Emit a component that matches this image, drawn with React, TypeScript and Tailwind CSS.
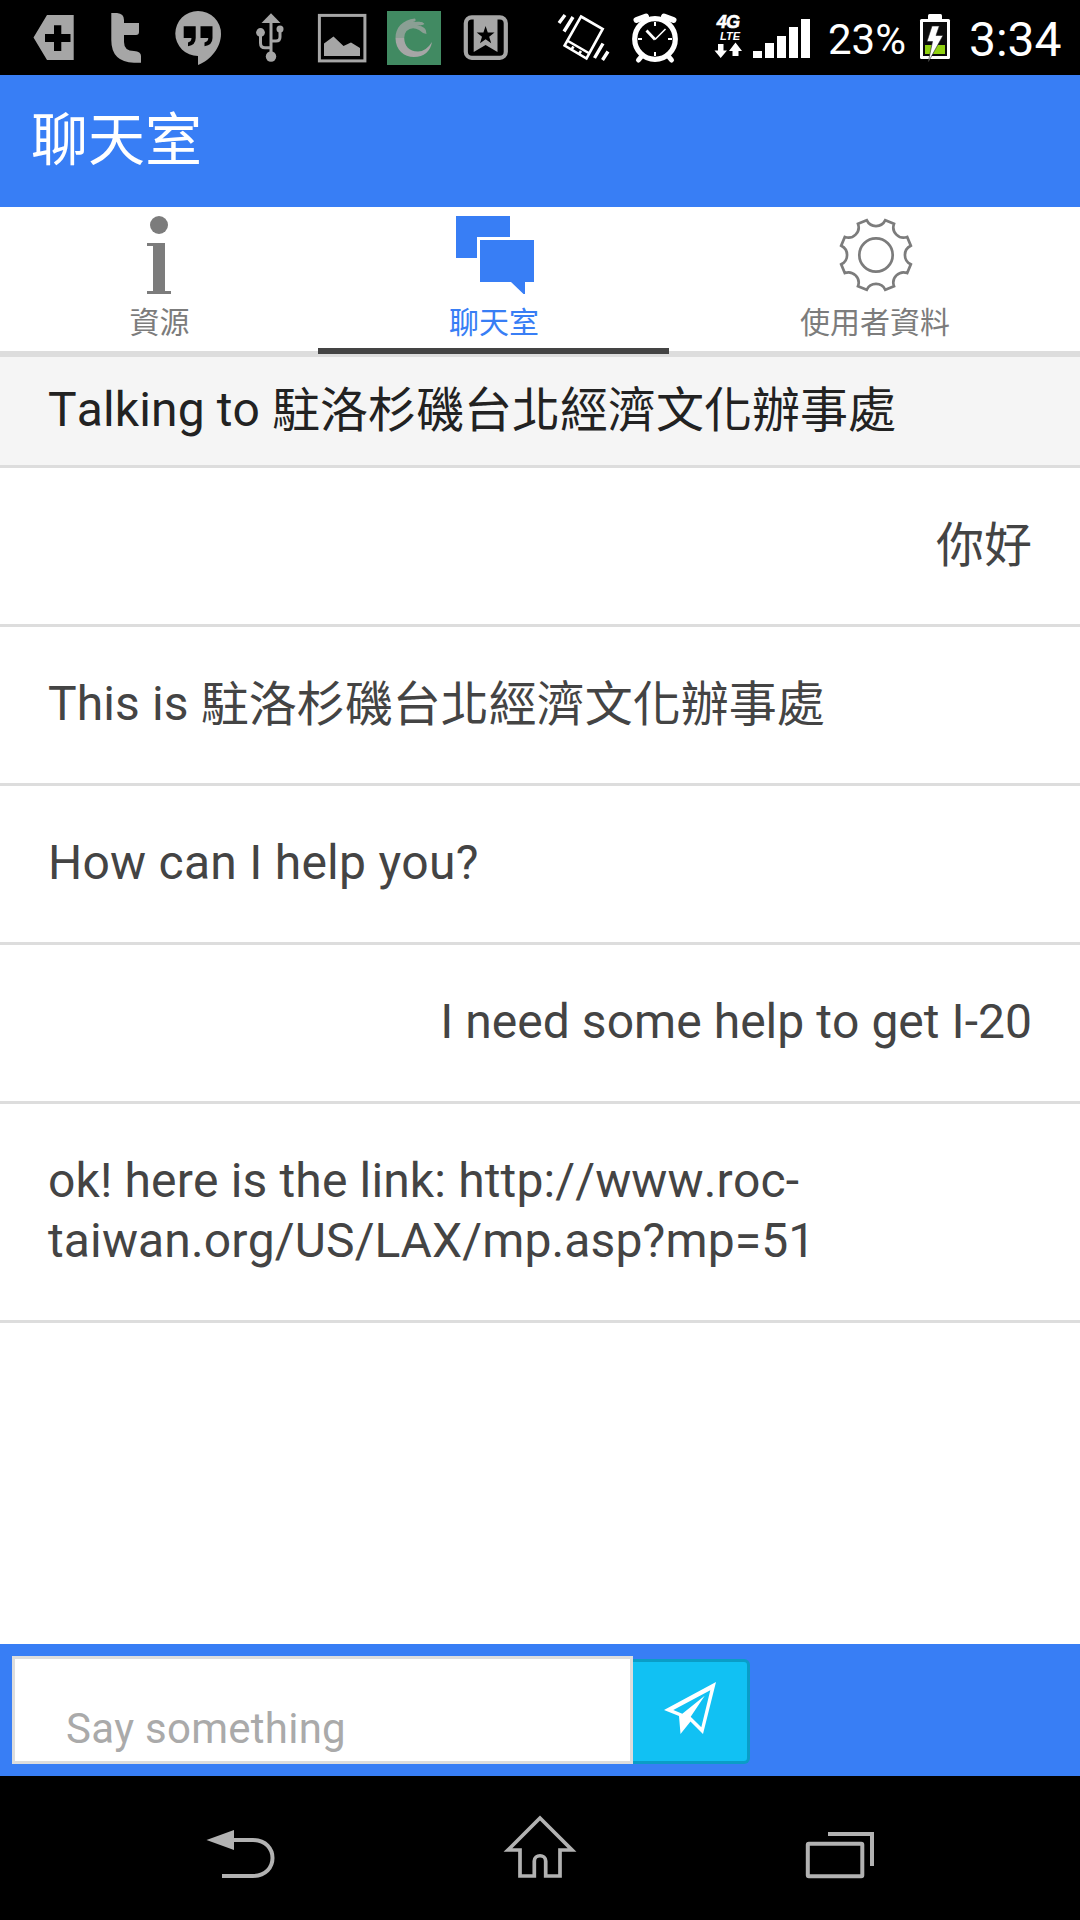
import type { ReactNode } from 'react';
import clsx from 'clsx';

type Message = { text: string; intro?: string; mine?: boolean; className?: string };

const messages: Message[] = [
  { text: '你好', mine: true, className: 'py-12' },
  { intro: 'This is ', text: '駐洛杉磯台北經濟文化辦事處', className: 'py-12' },
  { text: 'How can I help you?', className: 'pt-[47px] pb-[49px] tracking-[0.25px]' },
  {
    text: 'I need some help to get I-20',
    mine: true,
    className: 'pt-[47px] pb-[49px] tracking-[0.04px]',
  },
  {
    text: 'ok! here is the link: http://www.roc-taiwan.org/US/LAX/mp.asp?mp=51',
    className: 'pt-[47px] pb-[49px] tracking-[0.14px]',
  },
];

// Latin words in front of Chinese ones sit a pixel above the Chinese baseline
const Intro = ({ children }: { children: ReactNode }) => (
  <span className="align-[1px] leading-none tracking-[0.12px]">{children}</span>
);

// Status bar glyphs share one 75px tall strip, x is where the glyph's slice starts
const Glyph = ({ x, w, children }: { x: number; w: number; children: ReactNode }) => (
  <svg
    width={w}
    height={75}
    viewBox={`${x} 0 ${w} 75`}
    fill="currentColor"
    className="shrink-0"
  >
    {children}
  </svg>
);

const Notifications = () => (
  <div className="flex text-[#a6a6a6]">
    <Glyph x={0} w={92}>
      <path
        fillRule="evenodd"
        d="M33.5 37.5 47 15H73.7V60H47ZM54 25.3V34H45V42H54V51H61.3V42H70.5V34H61.3V25.3Z"
      />
    </Glyph>
    <Glyph x={92} w={70}>
      <path d="M111.3 13H117Q124 13.500 124 20V23H139V32Q139 35 136 35H124V42Q124 51 134 51Q141 51.500 141 56V62.700H134Q111.300 62 111.300 40Z" />
    </Glyph>
    <Glyph x={162} w={74}>
      <path d="M198 11A23 22.500 0 0 1 221 34C221 47 211 60 198 65V56A22.700 22.500 0 0 1 198 11Z" />
      <path
        d="M183.700 26.300H195.700V38Q195.700 45 188 46.300V42.500Q191.500 41.500 191.500 38H183.700ZM200.500 26.300H212.500V38Q212.500 45 204.500 46.300V42.500Q208.300 41.500 208.300 38H200.500Z"
        fill="#000"
      />
    </Glyph>
    <Glyph x={236} w={66}>
      <path d="M271 13.300 280.500 23H261.500Z" />
      <path
        d="M271 20V56M260.500 33V43Q260.500 47.800 265 47.800H271M280 29V37Q280 41 276 41H271"
        fill="none"
        stroke="currentColor"
        strokeWidth={3}
      />
      <circle cx={271} cy={56.500} r={5.200} />
      <circle cx={260.500} cy={32.500} r={4.400} />
      <circle cx={280} cy={29} r={3.500} />
    </Glyph>
    <Glyph x={302} w={76}>
      <rect
        x={319.400}
        y={15.400}
        width={45.500}
        height={45.500}
        fill="none"
        stroke="currentColor"
        strokeWidth={3}
      />
      <path d="M324 56V43.500L333.500 36.500 343.500 46 351 42.500 360 48V56Z" />
    </Glyph>
    <Glyph x={378} w={72}>
      <rect x={387} y={11} width={54} height={54} fill="#418a62" />
      <path
        d="M395.500 38C395.500 28 402 20 415 18.500Q417 21 413 22Q423 21 424 24Q420 26 417 25.500Q427 26 426.500 34Q422 33 419 30Q412 26 406.500 31Q404 34 404.200 38Z"
        fill="#8b9f94"
      />
      <path d="M395.500 38C395.500 50 404 57 414 57C424 57 430.500 51 432 42Q426 51.500 418 51.500C409 51.500 404.500 46 404.200 38Z" />
      <path d="M415 23Q420 20 424.500 24Q421 26 418 24.500Z" fill="#8b9f94" />
    </Glyph>
    <Glyph x={450} w={80}>
      <rect
        x={465.800}
        y={17.300}
        width={40}
        height={40.500}
        rx={6}
        fill="none"
        stroke="currentColor"
        strokeWidth={4.200}
      />
      <path d="M473.700 17H497.500V52L485.600 45 473.700 52Z" />
      <path
        d="M485.600 26 487.800 32.600H494.500L489.200 36.700 491.200 43.300 485.600 39.300 480 43.300 482 36.700 476.700 32.600H483.400Z"
        fill="#000"
      />
    </Glyph>
  </div>
);

const SystemIcons = () => (
  <div className="flex text-white">
    <Glyph x={550} w={70}>
      <path
        d="M581 16.500 602.700 29 586.500 58.500 564.600 45.500ZM568 41 589.500 53.500M573.500 46.500 571.500 49.500M581 51 579 54"
        fill="none"
        stroke="currentColor"
        strokeWidth={2.600}
      />
      <path
        d="M559 23 565 15M564 31.500 573 17M594.500 58 603 43.500M602.500 60 608 51.500"
        stroke="currentColor"
        strokeWidth={3.400}
      />
    </Glyph>
    <Glyph x={620} w={70}>
      <g fill="none" stroke="currentColor">
        <circle cx={655} cy={39} r={20.300} strokeWidth={5.200} />
        <path d="M636.500 20 646 16.500M673.500 20 664 16.500" strokeWidth={6} strokeLinecap="round" />
        <path d="M641 57 638.500 60M669 57 671.500 60" strokeWidth={5} strokeLinecap="round" />
        <path d="M655 22V26M655 52V56M638 39H642M668 39H672" strokeWidth={2} />
        <path d="M646.500 30.500 655 39.500" strokeWidth={2.800} />
        <path d="M655 39.500 665.500 29" strokeWidth={1.600} />
      </g>
    </Glyph>
    <div className="flex h-[75px] w-[56px] shrink-0 flex-col items-center pt-[14px] pl-[20px] font-['Liberation_Sans'] font-bold italic">
      <span className="text-[18px] leading-[17px] tracking-[-0.8px] [-webkit-text-stroke:0.6px_white]">
        4G
      </span>
      <span className="ml-1 text-[11px] leading-[10px]">LTE</span>
      <svg width={28} height={18} viewBox="714 41 28 18" fill="currentColor">
        <path d="M718 44H723.500V50.500H727L720.700 58 714.500 50.500H718ZM732.500 56H738.500V51H742L735.500 42.500 729 51H732.500Z" />
      </svg>
    </div>
    <Glyph x={746} w={82}>
      <path d="M753 51H762V58H753ZM765 43H774V58H765ZM777 36H786V58H777ZM789 27H798V58H789ZM801 19H810V58H801Z" />
    </Glyph>
    <span className="w-[85px] text-[42px] leading-[79px]">23%</span>
    <Glyph x={913} w={56}>
      <rect x={928} y={14} width={14} height={8} rx={1.500} />
      <rect x={920} y={19} width={30} height={40} rx={1.500} />
      <path d="M923 22H947V56H923Z" fill="#0b0b0b" />
      <path d="M925 45H945V54H925Z" fill="#8fd011" />
      <path d="M932 26H939.300L936 35.500H943L928.300 62 932.500 41.500H927Z" stroke="#222" strokeWidth={.6} />
    </Glyph>
    <span className="w-[111px] text-[48px] leading-[79px]">3:34</span>
  </div>
);

const InfoIcon = () => (
  <svg width={78} height={78} viewBox="0 0 78 78" fill="currentColor">
    <circle cx={39} cy={9} r={9} />
    <path d="M27 27H45V75H51V78H27V75H33V30H27Z" />
  </svg>
);

const ChatIcon = () => (
  <svg width={78} height={78} viewBox="0 0 78 78" fill="currentColor" className="ml-[3px]">
    <path d="M0 0H54V21H21V42H0ZM24 24H78V66H69V78H67.500L55 66H24Z" />
  </svg>
);

const GearIcon = () => (
  <svg
    width={78}
    height={78}
    viewBox="-39 -39 78 78"
    fill="none"
    stroke="currentColor"
    strokeWidth={2.700}
    className="ml-[3px]"
  >
    <circle r={16.700} />
    <path d="M-9.300-34.800A10.300 10.300 0 0 0 9.300-34.800L18-31.200A10.300 10.300 0 0 0 31.200-18L34.800-9.300A10.300 10.300 0 0 0 34.800 9.300L31.200 18A10.300 10.300 0 0 0 18 31.200L9.300 34.800A10.300 10.300 0 0 0-9.300 34.800L-18 31.200A10.300 10.300 0 0 0-31.200 18L-34.800 9.300A10.300 10.300 0 0 0-34.800-9.300L-31.200-18A10.300 10.300 0 0 0-18-31.200Z" />
  </svg>
);

const tabs = [
  { label: '資源', icon: <InfoIcon />, width: 'w-[318px]' },
  { label: '聊天室', icon: <ChatIcon />, width: 'w-[351px]', active: true },
  { label: '使用者資料', icon: <GearIcon />, width: 'w-[411px]' },
];

const Tabs = () => (
  <nav className="flex h-[150px] border-b-[6px] border-[#ddd] bg-white">
    {tabs.map(({ label, icon, width, active }) => (
      <button
        key={label}
        className={clsx(
          'relative flex flex-col items-center pt-[9px]',
          width,
          active ? 'text-[#387ef5]' : 'text-[#7c7c7c]'
        )}
      >
        {icon}
        <span className="mt-[9px] pl-px text-[30px] leading-[40px]">{label}</span>
        {active && <span className="absolute inset-x-0 -bottom-[3px] h-[6px] bg-[#444]" />}
      </button>
    ))}
  </nav>
);

const MessageBar = () => (
  <footer className="flex h-[132px] items-end bg-[#387ef5] p-3">
    <input
      placeholder="Say something"
      className="h-[108px] w-[621px] border-[3px] border-[#ddd] bg-white pt-[36px] pl-[51px] text-[42px] tracking-[0.25px] outline-none [font-kerning:none] placeholder:text-[#aaa]"
    />
    <button className="flex h-[105px] w-[117px] items-center justify-center rounded-r-[6px] border-[3px] border-l-0 border-[#0a9dc7] bg-[#11c1f3] pr-px pb-[7px]">
      <svg width={52} height={52} viewBox="0 0 52 52" fill="#fff">
        <path
          fillRule="evenodd"
          d="M52 0 0 28 15 34 16.500 52 26.500 39.500 39 52ZM9.300 28 46.300 8.300 37.300 45.300 26.700 34.700 40.700 13.700 18.300 31.700Z"
        />
      </svg>
    </button>
  </footer>
);

const NavBar = () => (
  <div className="flex h-36 items-center justify-center bg-black text-[#b2b2b2]">
    <svg width={300} height={144} viewBox="90 1776 300 144" fill="none">
      <path d="M206.500 1840 234 1830V1850Z" fill="currentColor" />
      <path
        d="M232 1840H253C279 1840 279 1876 253 1876H222"
        stroke="currentColor"
        strokeWidth={4}
      />
    </svg>
    <svg width={300} height={144} viewBox="390 1776 300 144" fill="none">
      <path
        d="M540 1818 508 1850H520V1876H534.300V1861C534.300 1854 545.700 1854 545.700 1861V1876H560V1850H572Z"
        stroke="currentColor"
        strokeWidth={3.700}
      />
    </svg>
    <svg width={300} height={144} viewBox="690 1776 300 144" fill="none">
      <rect
        x={807.800}
        y={1843.700}
        width={54.500}
        height={32.500}
        rx={1}
        stroke="currentColor"
        strokeWidth={4}
      />
      <path d="M828 1834H872V1866" stroke="currentColor" strokeWidth={4} />
    </svg>
  </div>
);

export default function App() {
  return (
    <div className="flex h-[1920px] w-[1080px] flex-col overflow-hidden bg-white font-['Roboto','Noto_Sans_CJK_TC',sans-serif]">
      <div className="flex h-[75px] shrink-0 justify-between bg-black">
        <Notifications />
        <SystemIcons />
      </div>
      <header className="flex h-[132px] items-center bg-[#387ef5] px-[31px]">
        <h1 className="text-[57px] leading-[132px] text-white">聊天室</h1>
      </header>
      <Tabs />
      <main className="flex-1 text-[48px] leading-[60px] text-[#444] [font-kerning:none]">
        <h2 className="h-[111px] border-b-[3px] border-[#ddd] bg-[#f5f5f5] px-12 pt-[24px] text-[#222]">
          <Intro>Talking to </Intro>
          駐洛杉磯台北經濟文化辦事處
        </h2>
        {messages.map(({ text, intro, mine, className }) => (
          <p
            key={text}
            className={clsx(
              'border-b-[3px] border-[#ddd] px-12',
              className,
              mine && 'text-right'
            )}
          >
            {intro && <Intro>{intro}</Intro>}
            {text}
          </p>
        ))}
      </main>
      <MessageBar />
      <NavBar />
    </div>
  );
}
